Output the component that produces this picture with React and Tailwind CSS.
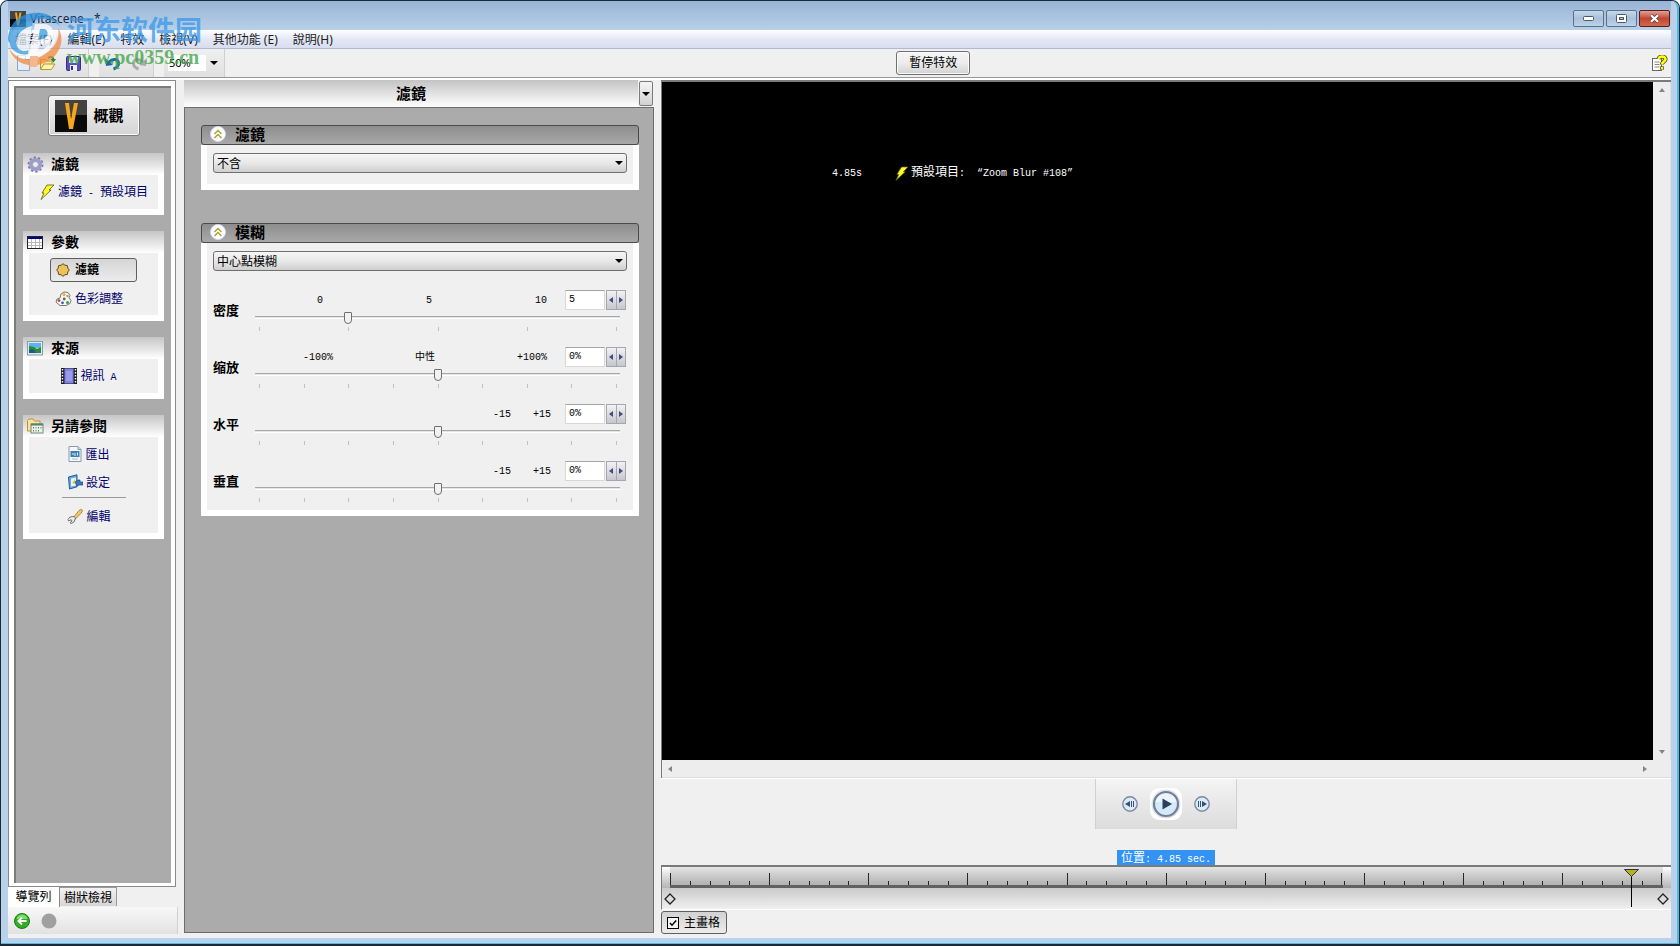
import { useState } from 'react'

const BoltIcon = ({ size = 16 }) => (
	<svg width={size} height={size} viewBox="0 0 16 16">
		<path d="M8 1h7L10 6h2L2 15.5 5 9H3z" fill="#ffff20" stroke="#55551a" strokeWidth="0.8" />
	</svg>
)

const GearIcon = () => (
	<svg width="17" height="17" viewBox="0 0 17 17">
		<circle cx="8.5" cy="8.5" r="7" fill="none" stroke="#7c7cab" strokeWidth="2" strokeDasharray="2.4 2" />
		<circle cx="8.5" cy="8.5" r="4.9" fill="none" stroke="#9d9dca" strokeWidth="3.4" />
		<circle cx="8.5" cy="8.5" r="3.1" fill="#ececf2" stroke="#7777a4" strokeWidth="0.7" />
	</svg>
)

const TableIcon = () => (
	<svg width="16" height="13" viewBox="0 0 16 13">
		<rect x="0.5" y="0.5" width="15" height="12" fill="#fff" stroke="#222" />
		<rect x="1" y="1" width="14" height="2" fill="#000090" />
		<path d="M1 6.500h14M1 9.500h14M4.500 3v9M8.500 3v9M12.500 3v9" stroke="#b8b8b8" />
	</svg>
)

const StarIcon = () => (
	<svg width="14" height="14" viewBox="0 0 14 14">
		<path d="M7 .7l1.900 1.500 2.500.400.400 2.500L13.300 7l-1.500 1.900-.400 2.500-2.500.400L7 13.300l-1.900-1.500-2.500-.400-.400-2.500L.700 7l1.500-1.900.400-2.500 2.500-.400z" fill="#eec25a" stroke="#5c4d1e" />
	</svg>
)

const PaletteIcon = () => (
	<svg width="17" height="15" viewBox="0 0 17 15">
		<path d="M6 3l3-2 4 .5 2 3-1 2 2 3-1 3-4 2H5L1 11l1-3 3-1z" fill="#f7f7f3" stroke="#777" />
		<circle cx="9" cy="3.6" r="1.5" fill="#e7b23a" />
		<circle cx="12.5" cy="5" r="1.3" fill="#c9a36a" />
		<circle cx="4" cy="9.6" r="1.4" fill="#d03a20" />
		<circle cx="7.5" cy="11.8" r="1.4" fill="#3a60c0" />
		<circle cx="12.5" cy="11.4" r="1.5" fill="#3c9a43" />
		<circle cx="9.2" cy="8" r="1.4" fill="#606068" />
	</svg>
)

const PictureIcon = () => (
	<svg width="16" height="15" viewBox="0 0 16 15">
		<rect x="0.5" y="0.5" width="15" height="13.5" fill="#d9ecf8" stroke="#8b9aa5" />
		<rect x="2" y="2" width="12" height="5" fill="#5fb3ea" />
		<path d="M2 5l5 1 3 2 4-2v6H2z" fill="#2c8a3a" />
		<path d="M2 9l4-1 3 4H2z" fill="#1c5a86" />
	</svg>
)

const FolderIcon = () => (
	<svg width="17" height="16" viewBox="0 0 17 16">
		<path d="M.5 13V2.5L2 1h4l1.500 2H13v10z" fill="#fae39a" stroke="#c3922e" />
		<rect x="4" y="6" width="12" height="9" fill="#edf3e2" stroke="#6f8b75" />
		<rect x="4" y="5.500" width="12" height="2" fill="#4e8378" />
		<path d="M6.500 9v1.500M9 9v1.500M11.500 9v1.500M14 9v1.500M6.500 12v1.500M9 12v1.500M11.500 12v1.500" stroke="#5c7f86" />
	</svg>
)

const FilmIcon = () => (
	<svg width="16" height="16" viewBox="0 0 16 16">
		<rect width="16" height="16" fill="#1c1c28" />
		<rect x="3.500" y="0.500" width="9" height="15" fill="#8484e0" />
		<rect x="5" y="3" width="6" height="10" fill="#9999ee" />
		<path d="M1.500 1v15M14.500 1v15" stroke="#fff" strokeWidth="1.400" strokeDasharray="1.500 1.500" />
	</svg>
)

const ExportIcon = () => (
	<svg width="14" height="16" viewBox="0 0 14 16">
		<path d="M1 .5h9l3 3v12H1z" fill="#f2f8fd" stroke="#8c9aa8" />
		<path d="M10 .5v3h3" fill="#cfdbe6" stroke="#8c9aa8" />
		<rect x="2.500" y="5" width="9" height="6" fill="#3e7fb2" />
		<path d="M4 8h2M7 7v3M9.500 6.500v3" stroke="#e8f4ff" />
		<path d="M4 13h6" stroke="#9cb" />
	</svg>
)

const SettingsIcon = () => (
	<svg width="15" height="16" viewBox="0 0 15 16">
		<path d="M.5 3L9 .8v12L1.500 15z" fill="#64a9e6" stroke="#1d5c9c" />
		<path d="M3 4.500l5-1v8l-5 1z" fill="#edf5fb" />
		<path d="M4 9l3-4 .500 5z" fill="#f0c541" />
		<path d="M7 8l3-2h2v2h3v3h-4l-2 1z" fill="#3a7ac0" stroke="#174c83" strokeWidth="0.700" />
	</svg>
)

const WrenchIcon = () => (
	<svg width="16" height="16" viewBox="0 0 16 16">
		<path d="M6.500 9.500L12 2.500l2.500-1.200 1 1.500-1.500 2.500-6 6z" fill="#f3c968" stroke="#9a7221" strokeWidth="0.800" />
		<path d="M7 8.500l1.500 1.500-1.500 4-3 1.500-1-.8 2-1.700-.8-1.300-2.700 1.300-.5-1.500 2-2.500z" fill="#ececec" stroke="#55555c" strokeWidth="0.800" />
	</svg>
)

const LogoIcon = ({ size = 32 }) => (
	<svg width={size} height={size} viewBox="0 0 32 32">
		<rect width="32" height="15" fill="#434343" />
		<rect y="15" width="32" height="17" fill="#0a0a0a" />
		<path d="M10 3h4l2 16 3-16h4l-5 26h-4z" fill="#f4a71c" />
	</svg>
)

const CaretIcon = () => (
	<svg width="8" height="4" viewBox="0 0 8 4">
		<path d="M0 0h8L4 4z" fill="#000" />
	</svg>
)

const NewIcon = () => (
	<svg width="13" height="16" viewBox="0 0 13 16">
		<path d="M.5.5h8l4 4v11H.5z" fill="#e4edfc" stroke="#8fa6d4" />
		<path d="M8.500.5v4h4" fill="#fff" stroke="#8fa6d4" />
	</svg>
)

const OpenIcon = () => (
	<svg width="16" height="16" viewBox="0 0 16 16">
		<path d="M.5 14V4.500h5L7 6h5v3" fill="#f8e79a" stroke="#b09a3a" />
		<path d="M.5 14.500L4 9h11l-3.500 5.500z" fill="#fff3b0" stroke="#b09a3a" />
		<path d="M8 3c3-2.500 5-1 5.500 1.500" fill="none" stroke="#2a8a28" strokeWidth="2" />
		<path d="M10.500 4h5.500l-2.500 3.500z" fill="#2a8a28" />
	</svg>
)

const SaveIcon = () => (
	<svg width="15" height="15" viewBox="0 0 15 15">
		<rect x="0.500" y="0.500" width="14" height="14" rx="1" fill="#5a50b8" stroke="#37308a" />
		<rect x="3" y="1" width="9" height="6" fill="#d8e2f4" />
		<rect x="4" y="9" width="7" height="6" fill="#f0f0f4" />
		<rect x="5" y="10" width="2" height="4" fill="#37308a" />
	</svg>
)

const UndoIcon = ({ color }) => (
	<svg width="16" height="15" viewBox="0 0 16 15">
		<path d="M4 6c4-4 9-3 9.500 1 .3 3-2 5-5 6" fill="none" stroke={color} strokeWidth="3" />
		<path d="M0 2l1 8 7-1z" fill={color} />
	</svg>
)

const HelpIcon = () => (
	<svg width="16" height="16" viewBox="0 0 16 16">
		<rect x="0.500" y="3.500" width="9" height="12" fill="#fff" stroke="#666" />
		<path d="M2.500 7h5M2.500 9.500h5M2.500 12h5" stroke="#888" />
		<path d="M6.500 4c1-3.500 7.500-3 7 .5-.2 2-3.500 2-3.500 5M10 11.500v3" fill="none" stroke="#333300" strokeWidth="4" />
		<path d="M6.500 4c1-3.500 7.500-3 7 .5-.2 2-3.500 2-3.500 5M10 12v2.200" fill="none" stroke="#ffff10" strokeWidth="2.600" />
	</svg>
)

const CollapseIcon = () => (
	<svg width="16" height="16" viewBox="0 0 16 16">
		<circle cx="8" cy="8" r="7.500" fill="#fff" stroke="#d5d5f5" />
		<path d="M4.500 8L8 4.500 11.500 8M4.500 12L8 8.500l3.500 3.500" fill="none" stroke="#a3a32c" strokeWidth="1.400" />
	</svg>
)

// smaller latin text that sits between the CJK labels
const Mono = ({ children }) => (
	<span className="whitespace-pre font-['Liberation_Mono',monospace] text-[10px]">{children}</span>
)

const menus = ['檔案(F)', '編輯(E)', '特效', '檢視(V)', '其他功能 (E)', '說明(H)']

const groups = [
	{
		title: '濾鏡',
		icon: <GearIcon />,
		items: [{ icon: <BoltIcon />, label: <>濾鏡<Mono> - </Mono>預設項目</>, wide: true }]
	},
	{
		title: '參數',
		icon: <TableIcon />,
		items: [
			{ icon: <StarIcon />, label: '濾鏡', active: true },
			{ icon: <PaletteIcon />, label: '色彩調整' }
		]
	},
	{
		title: '來源',
		icon: <PictureIcon />,
		items: [{ icon: <FilmIcon />, label: <>視訊<Mono> A</Mono></> }]
	},
	{
		title: '另請參閱',
		icon: <FolderIcon />,
		items: [
			{ icon: <ExportIcon />, label: '匯出' },
			{ icon: <SettingsIcon />, label: '設定' },
			{ icon: <WrenchIcon />, label: '編輯', divider: true }
		]
	}
]

const params = [
	{ id: 'density', label: '密度', value: 25, text: '5', ticks: 5, scale: ['0', '5', '10'], layout: 'justify-between pl-[62px] pr-[18px]' },
	{ id: 'zoom', label: '缩放', value: 50, text: '0%', ticks: 9, scale: ['-100%', '中性', '+100%'], layout: 'justify-between pl-[48px] pr-[18px]' },
	{ id: 'horizontal', label: '水平', value: 50, text: '0%', ticks: 9, scale: ['-15', '+15'], layout: 'justify-end gap-[22px] pr-[14px]' },
	{ id: 'vertical', label: '垂直', value: 50, text: '0%', ticks: 9, scale: ['-15', '+15'], layout: 'justify-end gap-[22px] pr-[14px]' }
]

const TitleBar = () => (
	<div className="flex h-[29px] items-center bg-gradient-to-b from-[#98b4d4] to-[#b9d0e9] pt-[6px] pr-px pl-[2px]">
		<LogoIcon size={16} />
		<span className="ml-1 text-[12px] text-[#1b2a3c]">Vitascene - *</span>
		<div className="ml-auto flex gap-[2px]">
			<button aria-label="Minimize" className="flex h-[17px] w-[31px] items-center justify-center rounded-[2px] border border-[#5b7189] bg-gradient-to-b from-[#c6d8ea] via-[#a9c0d9] to-[#bcd3ea]">
				<svg width="11" height="5" viewBox="0 0 11 5"><rect x="0.500" y="0.500" width="10" height="4" rx="1" fill="#fff" stroke="#4d5866" /></svg>
			</button>
			<button aria-label="Maximize" className="flex h-[17px] w-[31px] items-center justify-center rounded-[2px] border border-[#5b7189] bg-gradient-to-b from-[#c6d8ea] via-[#a9c0d9] to-[#bcd3ea]">
				<svg width="11" height="9" viewBox="0 0 11 9">
					<rect x="0.500" y="0.500" width="10" height="8" rx="1" fill="#fff" stroke="#4d5866" />
					<rect x="3.500" y="3.500" width="4" height="2" fill="#a9c0d9" stroke="#4d5866" />
				</svg>
			</button>
			<button aria-label="Close" className="flex h-[17px] w-[31px] items-center justify-center rounded-[2px] border border-[#5a1c1c] bg-gradient-to-b from-[#e0a196] via-[#c2452f] to-[#d06b50]">
				<svg width="11" height="9" viewBox="0 0 11 9">
					<path d="M2 1.200l7 6.600M9 1.200L2 7.800" stroke="#53434a" strokeWidth="3.600" />
					<path d="M2 1.200l7 6.600M9 1.200L2 7.800" stroke="#fff" strokeWidth="2.200" />
				</svg>
			</button>
		</div>
	</div>
)

const MenuBar = () => (
	<nav className="flex h-[19px] items-end gap-[15px] border-b border-[#b4b8cc] bg-gradient-to-b from-white via-[#e4e8f5] to-[#d8def0] pl-[7px]">
		{menus.map((menu) => (
			<button key={menu} className="text-[12px] leading-[16px] text-[#1c1c1c]">{menu}</button>
		))}
	</nav>
)

const ToolBar = () => (
	<div className="flex h-[29px] items-center border-b border-[#969696] bg-[#f0f0f0]">
		<div className="flex h-full flex-[56] gap-[10px]">
			<div className="flex w-[81px] items-center justify-between border-r border-[#cfcfcf] bg-gradient-to-b from-[#f0f0f0] to-[#e0e0e0] pl-[9px] pr-[7px]">
				<button aria-label="New"><NewIcon /></button>
				<button aria-label="Open"><OpenIcon /></button>
				<button aria-label="Save"><SaveIcon /></button>
			</div>
			<div className="flex w-[55px] items-center justify-between border-r border-[#cfcfcf] bg-gradient-to-b from-[#f0f0f0] to-[#e0e0e0] px-[6px]">
				<button aria-label="Undo"><UndoIcon color="#1f65ae" /></button>
				<button aria-label="Redo" className="-scale-x-100"><UndoIcon color="#aaaaaa" /></button>
			</div>
			<div className="flex w-[61px] items-center gap-1 border-r border-[#cfcfcf] bg-gradient-to-b from-[#f0f0f0] to-[#e0e0e0] pl-[4px]">
				<input aria-label="Zoom" defaultValue="50%" className="h-[16px] w-[38px] bg-white pl-px text-[11px] text-black outline-none" />
				<CaretIcon />
			</div>
		</div>
		<button className="h-[24px] rounded-[3px] border border-[#707070] bg-gradient-to-b from-[#f5f5f5] via-[#ececec] to-[#d2d2d2] px-3 text-[12px] leading-[22px] shadow-[inset_0_0_0_1px_#fafafa]">
			暫停特效
		</button>
		<div className="flex flex-[44] justify-end pr-[3px]">
			<button aria-label="Help"><HelpIcon /></button>
		</div>
	</div>
)

const SidebarGroup = ({ group }) => (
	<section className="bg-white">
		<h2 className="flex h-[22px] items-center bg-gradient-to-b from-[#c6c6c6] to-white pl-[4px] text-[14px] font-bold leading-[22px]">
			<span className="w-[24px]">{group.icon}</span>
			{group.title}
		</h2>
		<div className="px-[6px] pb-[6px]">
			<ul className="bg-[#f0f0f0] py-[3px]">
				{group.items.map((item, i) => (
					<li key={i}>
						{item.divider && <hr className="mx-auto mt-px mb-1 w-[64px] border-[#9b9b9b]" />}
						<div className={`flex h-[28px] items-center justify-center ${item.wide || item.active ? '' : 'pr-[9px]'}`}>
							{item.active ? (
								<button className="flex h-[24px] w-[87px] items-center gap-[5px] rounded-[3px] border border-[#5f5f5f] bg-gradient-to-b from-[#d5d5d5] to-[#ececec] pl-[5px] text-[12px] font-bold">
									{item.icon}
									{item.label}
								</button>
							) : (
								<a href="#" className="flex items-center gap-[3px] whitespace-nowrap text-[12px] leading-[18px] text-[#00006b]">
									{item.icon}
									<span className="pt-px">{item.label}</span>
								</a>
							)}
						</div>
					</li>
				))}
			</ul>
		</div>
	</section>
)

const Sidebar = () => (
	<aside className="flex w-[170px] shrink-0 flex-col pb-[4px]">
		<div className="mr-[2px] flex-1 border border-[#8a8a8a] bg-white p-[5px] pr-[4px] pb-[3px]">
			<div className="h-full border-t-2 border-l-2 border-[#7c7c7c] bg-[#ababab] px-[7px] pt-[7px]">
				<div className="flex justify-center">
					<button className="flex h-[41px] w-[92px] items-center gap-[7px] rounded-[3px] border border-[#7c7c7c] bg-gradient-to-b from-[#f4f4f4] to-[#d4d4d4] pl-[6px] text-[15px] font-bold shadow-[inset_0_0_0_1px_#fafafa]">
						<LogoIcon />
						概觀
					</button>
				</div>
				<div className="mt-[17px] flex flex-col gap-4">
					{groups.map((group) => (
						<SidebarGroup key={group.title} group={group} />
					))}
				</div>
			</div>
		</div>
		<div className="flex h-[20px] items-start text-[12px]" role="tablist">
			<button role="tab" aria-selected="true" className="h-[20px] w-[52px] border-r border-[#8a8a8a] bg-white leading-[20px]">導覽列</button>
			<button role="tab" aria-selected="false" className="h-[19px] w-[57px] border border-l-0 border-b-0 border-[#9a9a9a] bg-gradient-to-b from-[#f2f2f2] to-[#d6d6d6] leading-[17px]">樹狀檢視</button>
		</div>
		<div className="flex h-[27px] items-center gap-[11px] border-r border-[#d2d2d2] bg-gradient-to-b from-[#f8f8f8] to-[#e2e2e2] pl-[6px]">
			<button aria-label="Back">
				<svg width="16" height="16" viewBox="0 0 16 16">
					<circle cx="8" cy="8" r="7.500" fill="#2fae22" stroke="#1e7c17" />
					<path d="M2.500 6c1-6 10-6 11 0z" fill="#7fdc6c" />
					<path d="M12.500 8H5M8 4.500L4.500 8 8 11.500" fill="none" stroke="#fff" strokeWidth="2" />
				</svg>
			</button>
			<button aria-label="Forward">
				<svg width="16" height="16" viewBox="0 0 16 16"><circle cx="8" cy="8" r="7.500" fill="#a0a0a0" /></svg>
			</button>
		</div>
	</aside>
)

const Section = ({ title, children }) => (
	<section>
		<h2 className="flex h-[20px] items-center gap-[9px] rounded-[3px] border border-[#4a4a4a] bg-gradient-to-b from-[#8e8e8e] to-[#a9a9a9] pb-[2px] pl-[8px] text-[15px] font-bold leading-[16px]">
			<button aria-label={`Collapse ${title}`}><CollapseIcon /></button>
			{title}
		</h2>
		<div className="bg-white px-[6px] pb-[6px]">
			<div className="bg-[#f0f0f0] px-[6px] pt-[8px]">{children}</div>
		</div>
	</section>
)

const Dropdown = ({ label, value }) => (
	<div className="relative">
		<select aria-label={label} className="block h-[20px] w-full appearance-none rounded-[3px] border border-[#707070] bg-gradient-to-b from-[#f6f6f6] via-[#e8e8e8] to-[#cfcfcf] pt-px pl-[3px] text-[12px] leading-[18px]">
			<option>{value}</option>
		</select>
		<span className="pointer-events-none absolute top-[8px] right-[4px]"><CaretIcon /></span>
	</div>
)

const ParamRow = ({ param }) => {
	const [value, setValue] = useState(param.value)

	return (
		<div className="flex h-[54px] items-center">
			<label htmlFor={param.id} className="w-[42px] pb-[4px] text-[13px] font-bold leading-5">{param.label}</label>
			<div className="flex h-full flex-1 flex-col pt-[5px]">
				<div className="flex h-[21px]">
					<div className={`flex flex-1 text-[10px] leading-[21px] ${param.layout}`}>
						{param.scale.map((mark) => (
							<span key={mark} className="font-['Liberation_Mono','Noto_Sans_CJK_TC',monospace]">{mark}</span>
						))}
					</div>
					<input aria-label={`${param.label} value`} defaultValue={param.text} className="h-[20px] w-[40px] border border-[#d8d8d8] border-t-[#a5a5a5] bg-white pb-[2px] pl-[3px] font-['Liberation_Mono',monospace] text-[10px] outline-none" />
					<div className="mr-px ml-px flex h-[20px] w-[20px] border border-[#a6a6ae]">
						<button aria-label="Decrease" className="flex flex-1 items-center justify-center border-r border-[#a6a6ae] bg-gradient-to-b from-[#f2f2f4] to-[#c6c6ce]">
							<svg width="4" height="6" viewBox="0 0 4 6"><path d="M4 0v6L0 3z" fill="#434c7c" /></svg>
						</button>
						<button aria-label="Increase" className="flex flex-1 items-center justify-center bg-gradient-to-b from-[#f2f2f4] to-[#c6c6ce]">
							<svg width="4" height="6" viewBox="0 0 4 6"><path d="M0 0v6l4-3z" fill="#434c7c" /></svg>
						</button>
					</div>
				</div>
				<input
					id={param.id}
					type="range"
					value={value}
					onChange={(e) => setValue(Number(e.target.value))}
					className="mr-[7px] h-[13px] appearance-none bg-transparent [&::-webkit-slider-runnable-track]:h-[3px] [&::-webkit-slider-runnable-track]:border-t [&::-webkit-slider-runnable-track]:border-b [&::-webkit-slider-runnable-track]:border-t-[#a8a8a8] [&::-webkit-slider-runnable-track]:border-b-white [&::-webkit-slider-runnable-track]:bg-[#e4e4e4] [&::-webkit-slider-thumb]:-mt-[5px] [&::-webkit-slider-thumb]:h-[12px] [&::-webkit-slider-thumb]:w-[8px] [&::-webkit-slider-thumb]:appearance-none [&::-webkit-slider-thumb]:rounded-t-[1px] [&::-webkit-slider-thumb]:rounded-b-[4px] [&::-webkit-slider-thumb]:border [&::-webkit-slider-thumb]:border-[#6e6e6e] [&::-webkit-slider-thumb]:bg-[#f2f2f2]"
				/>
				<div className="mt-[3px] mr-[10px] ml-[4px] flex justify-between">
					{Array.from({ length: param.ticks }, (_, i) => (
						<span key={i} className="h-[4px] w-px bg-[#c0c0c0]" />
					))}
				</div>
			</div>
		</div>
	)
}

const ParameterPanel = () => (
	<main className="mr-[7px] ml-[6px] flex w-[470px] shrink-0 flex-col pb-[5px]">
		<header className="flex h-[27px] items-center">
			<h1 className="flex-1 bg-gradient-to-b from-[#c4c4c4] to-white text-center text-[15px] font-bold leading-[27px]">濾鏡</h1>
			<button aria-label="Panel menu" className="mr-px ml-px flex h-[25px] w-[14px] items-center justify-center rounded-[2px] border border-[#7a7a7a] bg-gradient-to-b from-[#f5f5f5] to-[#d2d2d2]">
				<CaretIcon />
			</button>
		</header>
		<div className="flex flex-1 flex-col gap-[33px] border border-[#6d6d6d] bg-[#ababab] pt-[17px] pr-[14px] pl-[16px]">
			<Section title="濾鏡">
				<div className="pb-[11px]">
					<Dropdown label="濾鏡" value="不含" />
				</div>
			</Section>
			<Section title="模糊">
				<Dropdown label="模糊" value="中心點模糊" />
				<div className="flex flex-col gap-[3px] pt-[14px]">
					{params.map((param) => (
						<ParamRow key={param.id} param={param} />
					))}
				</div>
			</Section>
		</div>
	</main>
)

const Viewport = () => (
	<div className="flex flex-1 flex-col border-t-2 border-l border-[#7a7a7a]">
		<div className="flex flex-1">
			<div className="flex flex-1 items-start bg-black pt-[81px] pl-[170px] text-[12px] leading-[18px] text-white">
				<div className="w-[62px]"><Mono>4.85s</Mono></div>
				<div className="flex items-center gap-[2px]">
					<BoltIcon size={15} />
					<span>預設項目<Mono>:  “Zoom Blur #108”</Mono></span>
				</div>
			</div>
			<div className="flex w-[18px] flex-col items-center justify-between border-r border-[#e0e0e0] bg-[#ededed] py-[6px]">
				<svg width="6" height="4" viewBox="0 0 6 4"><path d="M0 4h6L3 0z" fill="#858585" /></svg>
				<svg width="6" height="4" viewBox="0 0 6 4"><path d="M0 0h6L3 4z" fill="#858585" /></svg>
			</div>
		</div>
		<div className="flex h-[18px] items-center justify-between border-b border-[#dcdcdc] bg-[#ededed] pr-[24px] pl-[6px]">
			<svg width="4" height="6" viewBox="0 0 4 6"><path d="M4 0v6L0 3z" fill="#858585" /></svg>
			<svg width="4" height="6" viewBox="0 0 4 6"><path d="M0 0v6l4-3z" fill="#858585" /></svg>
		</div>
	</div>
)

const Player = () => (
	<div className="border-t border-white">
		<div className="mx-auto flex h-[50px] w-[142px] items-center justify-center gap-[12px] border-x border-[#d0d0d0] bg-gradient-to-b from-[#f4f4f4] to-[#dcdcdc]">
			<button aria-label="Previous frame">
				<svg width="16" height="16" viewBox="0 0 16 16">
					<circle cx="8" cy="8" r="7.200" fill="#dcebf8" stroke="#7a8ba0" strokeWidth="1.400" />
					<path d="M3 8l5-3v6zM9 5h1v6H9zM11 5h1v6h-1z" fill="#37516f" />
				</svg>
			</button>
			<button aria-label="Play" className="rounded-[9px] bg-white">
				<svg width="32" height="32" viewBox="0 0 32 32">
					<circle cx="16" cy="16" r="14.500" fill="#dfe2ec" />
					<circle cx="16" cy="16" r="12" fill="#d6e9f8" stroke="#6f8197" strokeWidth="2.200" />
					<path d="M5.500 14c2-11 19-11 21 0z" fill="#edf5fb" />
					<path d="M12.500 10.500v11L22 16z" fill="#28415c" />
				</svg>
			</button>
			<button aria-label="Next frame">
				<svg width="16" height="16" viewBox="0 0 16 16">
					<circle cx="8" cy="8" r="7.200" fill="#dcebf8" stroke="#7a8ba0" strokeWidth="1.400" />
					<path d="M13 8L8 5v6zM4 5h1v6H4zM6 5h1v6H6z" fill="#37516f" />
				</svg>
			</button>
		</div>
	</div>
)

const KeyframeIcon = () => (
	<svg width="12" height="12" viewBox="0 0 12 12"><path d="M6 1l5 5-5 5-5-5z" fill="#ddd" stroke="#222" strokeWidth="1.300" /></svg>
)

const Timeline = () => {
	const position = 96.8

	return (
		<div className="border-t-2 border-l border-b border-[#7a7a7a] border-b-white">
			<div className="relative">
				<div className="flex h-[21px] bg-gradient-to-b from-[#e4e4e4] to-[#a8a8a8]">
					<div className="w-[8px] bg-gradient-to-b from-white to-[#b4b4b4]" />
					<div className="flex flex-1 items-end justify-between border-b-[3px] border-[#616161]">
						{Array.from({ length: 51 }, (_, i) => (
							<span key={i} className={`w-px bg-[#262626] ${i % 5 === 0 ? 'h-[12px]' : 'h-[4px]'}`} />
						))}
					</div>
					<div className="w-[8px] bg-gradient-to-b from-white to-[#b4b4b4]" />
				</div>
				<div className="flex h-[21px] items-center justify-between bg-gradient-to-b from-[#cacaca] to-[#f0f0f0] px-[2px]">
					<KeyframeIcon />
					<KeyframeIcon />
				</div>
				{/* Playhead */}
				<div className="absolute inset-y-0 right-[8px] left-[8px]">
					<svg className="absolute top-[2px] -ml-[7px]" style={{ left: `${position}%` }} width="15" height="38" viewBox="0 0 15 38">
						<path d="M7.500 6v32" stroke="#000" />
						<path d="M.5.5h14l-7 7z" fill="#b3b31e" stroke="#333" />
					</svg>
				</div>
			</div>
		</div>
	)
}

const Preview = () => {
	const [mainFrame, setMainFrame] = useState(true)

	return (
		<section className="flex min-w-0 flex-1 flex-col pb-[4px]">
			<Viewport />
			<Player />
			<div className="mt-[21px] flex justify-center">
				<output className="h-[15px] bg-[#3393f5] px-1 text-[12px] leading-[15px] text-white">
					位置<Mono>: 4.85 sec.</Mono>
				</output>
			</div>
			<Timeline />
			<label className="mt-px flex h-[23px] w-[66px] items-center gap-[5px] rounded-[3px] border border-[#5f5f5f] bg-gradient-to-b from-[#d2d2d2] to-[#ececec] pl-[5px] text-[12px] leading-[18px]">
				<span className="relative flex h-[12px] w-[12px]">
					<input type="checkbox" checked={mainFrame} onChange={() => setMainFrame(!mainFrame)} className="h-[12px] w-[12px] appearance-none border border-black bg-[#f4f4f4]" />
					{mainFrame && (
						<svg className="pointer-events-none absolute inset-0" width="12" height="12" viewBox="0 0 12 12">
							<path d="M3 6l2 2.200L9.200 3.500" fill="none" stroke="#000" strokeWidth="1.500" />
						</svg>
					)}
				</span>
				主畫格
			</label>
		</section>
	)
}

const Watermark = () => (
	<div className="pointer-events-none absolute top-[9px] left-[5px] flex items-start">
		<svg width="58" height="58" viewBox="0 0 58 58" opacity="0.750">
			<path d="M2 29C3 9 20 1 35 3c9 1 16 7 19 13-9-9-21-9-30-4C13 17 8 24 7 34c-3 0-5-2-5-5z" fill="#2c8fda" />
			<path d="M4 35C2 21 14 11 27 11l-5 33c-9 2-16-2-18-9z" fill="#3c9de0" />
			<path d="M5 38c8 9 20 9 31 2 8-5 12-11 14-18 1 11-6 19-15 24-12 6-24 3-30-8z" fill="#fff" />
			<path d="M3 38c7 13 23 15 36 6 11-7 15-17 13-26 7 10 3 24-8 32-15 10-36 6-41-12z" fill="#f28b3c" />
			<path d="M11 36c-3-9 5-18 15-20l-3 24c-5 2-10 1-12-4z" fill="#eef5fb" />
			<path d="M29 14h9c12 0 13 18 1 20l-6 1-2 11h-8z" fill="#fff" />
			<path d="M34 19h4c5 0 5 9-1 10l-5 1z" fill="#3c9de0" />
			<path d="M24 46h8l-1 11h-8z" fill="#f6a873" />
		</svg>
		<div className="ml-[3px] whitespace-nowrap">
			<div className="font-['Noto_Sans_CJK_SC',sans-serif] text-[27px] font-bold leading-[38px] text-[#3d9ae8]/80">河东软件园</div>
			<div className="font-['Liberation_Serif',serif] text-[20px] font-bold leading-[18px] text-[#3fa648]/80">www.pc0359.cn</div>
		</div>
	</div>
)

const App = () => {
	return (
		<div className="relative flex h-screen flex-col rounded-t-lg border border-b-2 border-[#1b2a38] bg-[#b9d1ea] font-['Noto_Sans','Noto_Sans_CJK_TC',sans-serif] text-black">
			<div className="flex flex-1 flex-col rounded-t-lg border-r-2 border-b border-[#54b8dc] bg-[#b9d1ea] pr-[6px] pb-[5px] pl-[7px]">
				<TitleBar />
				<MenuBar />
				<ToolBar />
				<div className="flex flex-1 border-t-2 border-white bg-[#f0f0f0]">
					<Sidebar />
					<ParameterPanel />
					<Preview />
				</div>
			</div>
			<Watermark />
		</div>
	)
}

export default App
